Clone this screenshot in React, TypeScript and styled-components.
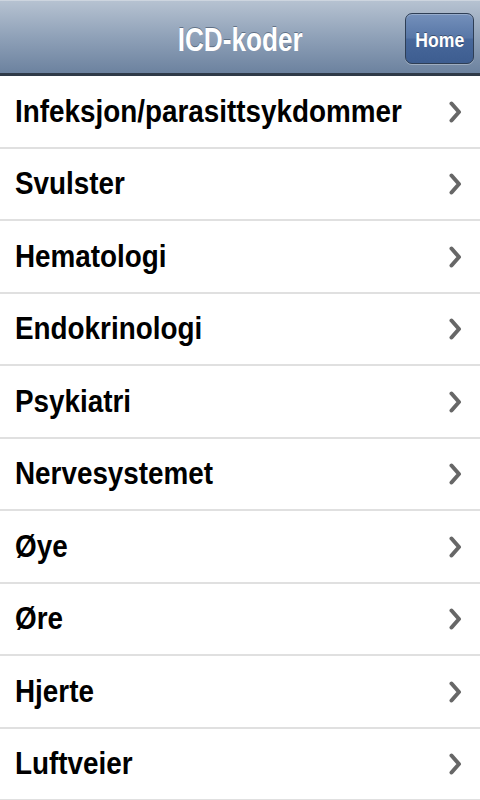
import React from "react";
import styled, { createGlobalStyle } from "styled-components";

const Global = createGlobalStyle`
  html, body { margin: 0; padding: 0; background: #ffffff; }
  body { font-family: "Liberation Sans", Arial, sans-serif; }
`;

const Page = styled.div`
  width: 480px;
  min-height: 800px;
  background: #ffffff;
  overflow: hidden;
`;

const NavBar = styled.header`
  position: relative;
  height: 76px;
  box-sizing: border-box;
  display: flex;
  align-items: center;
  justify-content: center;
  background: linear-gradient(to bottom, #b6c2d1 0%, #8fa1b8 50%, #6c829f 100%);
  border-top: 1px solid #cdd5df;
  border-bottom: 3px solid #2f3a48;
`;

const Title = styled.h1`
  margin: 4px 0 0 0;
  font-family: "Liberation Sans", Arial, sans-serif;
  font-weight: 700;
  font-size: 34px;
  color: #ffffff;
  transform: scaleX(0.77);
  text-shadow: 0 -1px 0 rgba(60, 75, 95, 0.6);
`;

const HomeButton = styled.button`
  position: absolute;
  right: 6px;
  top: 12px;
  width: 69px;
  height: 51px;
  border-radius: 7px;
  border: 1.5px solid #2e3e55;
  background: linear-gradient(to bottom, #7490bb 0%, #5877a7 48%, #48689b 52%, #3d5d90 100%);
  box-shadow: inset 0 1px 0 rgba(255, 255, 255, 0.25), 0 1px 0 rgba(255, 255, 255, 0.3);
  color: #ffffff;
  font-family: "Liberation Sans", Arial, sans-serif;
  font-weight: 700;
  font-size: 20px;
  padding: 3px 0 0 0;
  text-shadow: 0 -1px 0 rgba(0, 0, 0, 0.35);
`;

const ButtonText = styled.span`
  display: inline-block;
  transform: scaleX(0.88);
`;

const List = styled.ul`
  list-style: none;
  margin: 0;
  padding: 0;
`;

const Row = styled.li`
  height: 72.5px;
  box-sizing: border-box;
  display: flex;
  align-items: center;
  padding: 0 18px 0 15px;
  border-bottom: 2px solid #e0e0e0;
`;

const Label = styled.span`
  flex: 1;
  min-width: 0;
  white-space: nowrap;
  font-family: "Liberation Sans", Arial, sans-serif;
  font-weight: 700;
  font-size: 32px;
  color: #000000;
  transform: scaleX(0.87);
  transform-origin: left center;
`;

const ChevronIcon = styled.svg`
  flex-shrink: 0;
  margin-top: 1px;
`;

const Chevron = () => (
  <ChevronIcon width="13" height="22" viewBox="0 0 13 22">
    <path d="M2.5 2.5 L10 11 L2.5 19.5" fill="none" stroke="#676767" strokeWidth="4" strokeLinecap="round" strokeLinejoin="round" />
  </ChevronIcon>
);

const items = [
  "Infeksjon/parasittsykdommer",
  "Svulster",
  "Hematologi",
  "Endokrinologi",
  "Psykiatri",
  "Nervesystemet",
  "Øye",
  "Øre",
  "Hjerte",
  "Luftveier",
];

export default function App() {
  return (
    <Page>
      <Global />
      <NavBar>
        <Title>ICD-koder</Title>
        <HomeButton>
          <ButtonText>Home</ButtonText>
        </HomeButton>
      </NavBar>
      <List>
        {items.map((t) => (
          <Row key={t}>
            <Label>{t}</Label>
            <Chevron />
          </Row>
        ))}
      </List>
    </Page>
  );
}
